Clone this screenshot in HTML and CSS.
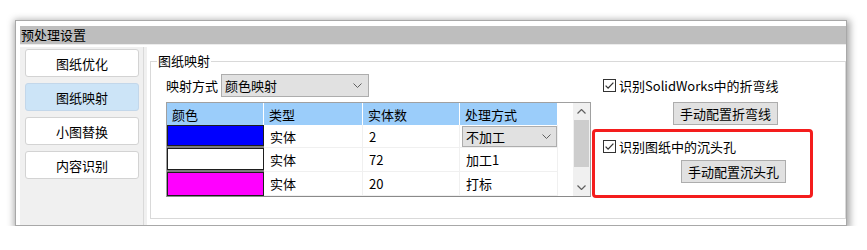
FILE: index.html
```html
<!DOCTYPE html>
<html lang="zh-CN">
<head>
<meta charset="utf-8">
<title>预处理设置</title>
<link rel="stylesheet" href="styles.css">
</head>
<body>
<div class="window">
  <div class="title">预处理设置</div>
  <div class="body">
    <div class="nav">
      <div class="nav-btn">图纸优化</div>
      <div class="nav-btn active">图纸映射</div>
      <div class="nav-btn">小图替换</div>
      <div class="nav-btn">内容识别</div>
    </div>
    <div class="main">
      <fieldset class="group">
        <legend>图纸映射</legend>
        <div class="group-inner">
          <div class="left-col">
            <div class="map-row">
              <span class="map-label">映射方式</span>
              <div class="combo">
                <span>颜色映射</span>
                <svg class="chev" width="9" height="5" viewBox="0 0 9 5"><path d="M0.5 0.5 L4.5 4.5 L8.5 0.5" fill="none" stroke="#606060" stroke-width="1"/></svg>
              </div>
            </div>
            <div class="data-table">
              <div class="th">颜色</div>
              <div class="th">类型</div>
              <div class="th">实体数</div>
              <div class="th">处理方式</div>
              <div class="th-fill"></div>
              <div class="scrollbar">
                <div class="sb-arrow"><svg width="9" height="5" viewBox="0 0 9 5"><path d="M0.5 4.5 L4.5 0.5 L8.5 4.5" fill="none" stroke="#606060" stroke-width="1.2"/></svg></div>
                <div class="sb-track"><div class="sb-thumb"></div></div>
                <div class="sb-arrow"><svg width="9" height="5" viewBox="0 0 9 5"><path d="M0.5 0.5 L4.5 4.5 L8.5 0.5" fill="none" stroke="#606060" stroke-width="1.2"/></svg></div>
              </div>

              <div class="sw"><div class="sw-in blue"></div></div>
              <div class="td">实体</div>
              <div class="td">2</div>
              <div class="td td-combo">
                <div class="cell-combo">
                  <span>不加工</span>
                  <svg class="chev" width="9" height="5" viewBox="0 0 9 5"><path d="M0.5 0.5 L4.5 4.5 L8.5 0.5" fill="none" stroke="#606060" stroke-width="1"/></svg>
                </div>
              </div>
              <div class="fill"></div>

              <div class="sw"><div class="sw-in white"></div></div>
              <div class="td">实体</div>
              <div class="td">72</div>
              <div class="td">加工1</div>
              <div class="fill"></div>

              <div class="sw last"><div class="sw-in magenta"></div></div>
              <div class="td">实体</div>
              <div class="td">20</div>
              <div class="td">打标</div>
              <div class="fill"></div>
            </div>
          </div>
          <div class="right-col">
            <div class="check">
              <svg class="cb" width="13" height="13" viewBox="0 0 13 13"><rect x="0.5" y="0.5" width="12" height="12" fill="#fff" stroke="#333"/><path d="M2.6 6.6 L5.1 9.1 L10.4 3.6" fill="none" stroke="#333" stroke-width="1.3"/></svg>
              <span>识别SolidWorks中的折弯线</span>
            </div>
            <div class="btn">手动配置折弯线</div>
            <div class="highlight">
              <div class="check">
                <svg class="cb" width="13" height="13" viewBox="0 0 13 13"><rect x="0.5" y="0.5" width="12" height="12" fill="#fff" stroke="#333"/><path d="M2.6 6.6 L5.1 9.1 L10.4 3.6" fill="none" stroke="#333" stroke-width="1.3"/></svg>
                <span>识别图纸中的沉头孔</span>
              </div>
              <div class="btn">手动配置沉头孔</div>
            </div>
          </div>
        </div>
      </fieldset>
    </div>
  </div>
</div>
</body>
</html>
```

FILE: styles.css
```css
* { box-sizing: border-box; }

body {
  margin: 0;
  background: #fff;
  font-family: "Noto Sans CJK SC", "Noto Sans", sans-serif;
  font-size: 13px;
  color: #000;
}

.window {
  margin: 20px 0 0 15px;
  width: 832px;
  height: 206px;
  border: 1px solid #a8a8a8;
  box-shadow: 1px 2px 7px 2px rgba(0, 0, 0, 0.35);
  background: #fff;
  padding: 5px 0 0 4px;
  display: flex;
  flex-direction: column;
}

.title {
  height: 18px;
  line-height: 18px;
  background: #bebebe;
  padding-left: 1px;
}

.body {
  flex: 1;
  display: flex;
  padding-top: 2px;
  border-top: 1px solid #ececec;
}

.nav {
  width: 123px;
  background: #f0f0f0;
  padding: 2px 0 0 5px;
  display: flex;
  flex-direction: column;
  gap: 6px;
}

.nav-btn {
  width: 114px;
  height: 28px;
  background: #fff;
  border: 1px solid #d3d3d3;
  border-radius: 3px;
  display: flex;
  align-items: center;
  justify-content: center;
}

.nav-btn.active {
  background: #cce4f7;
  border-color: #c3d7ea;
}

.main {
  flex: 1;
  border-left: 1px solid #d9d9d9;
  box-shadow: inset 3px 0 0 #f0f0f0;
  padding: 5px 0 5px 6px;
}

.group {
  margin: 0;
  border: 1px solid #d9d9d9;
  padding: 4px 0 20px 15px;
  min-width: 0;
}

.group legend {
  margin-left: -9px;
  padding: 0 1px;
  line-height: 18px;
}

.group-inner {
  display: flex;
}

.left-col {
  width: 425px;
}

.map-row {
  display: flex;
  align-items: center;
  gap: 3px;
  height: 23px;
}

.combo {
  width: 148px;
  height: 23px;
  border: 1px solid #adadad;
  background: #e1e1e1;
  display: flex;
  align-items: center;
  justify-content: space-between;
  padding: 0 6px 0 3px;
}

.data-table {
  margin-top: 5px;
  border: 1px solid #a0a0a0;
  border-bottom-color: #8a8a8a;
  display: grid;
  grid-template-columns: 97px 99px 97px 98px 15px 17px;
  grid-template-rows: 22px 23px 24px 24px;
  background: #fff;
}

.th {
  background: #9bcdfa;
  border-right: 1px solid #fff;
  padding-left: 5px;
  display: flex;
  align-items: center;
}

.th-fill { background: #fff; }

.scrollbar {
  grid-column: 6;
  grid-row: 1 / 5;
  background: #f0f0f0;
  display: flex;
  flex-direction: column;
}

.sb-arrow {
  height: 17px;
  display: flex;
  align-items: center;
  justify-content: center;
}

.sb-track {
  flex: 1;
  display: flex;
  flex-direction: column;
}

.sb-thumb {
  height: 47px;
  margin: 0 1px;
  background: #cdcdcd;
}

.td {
  padding-left: 6px;
  display: flex;
  align-items: center;
  border-bottom: 1px solid #f0f0f0;
  border-right: 1px solid #f0f0f0;
}

.td-combo {
  padding: 1px 0 0 2px;
  align-items: flex-start;
}

.cell-combo {
  width: 97px;
  height: 21px;
  border: 1px solid #adadad;
  background: #e1e1e1;
  display: flex;
  align-items: center;
  justify-content: space-between;
  padding: 0 5px 0 3px;
}

.sw {
  border-bottom: 2px solid #7c7c7c;
}

.sw.last { border-bottom: none; }

.sw-in {
  height: 100%;
  border: 1px solid #1e1e1e;
}

.blue { background: #0000ff; }
.white { background: #fff; }
.magenta { background: #ff00ff; }

.right-col {
  flex: 1;
  padding-top: 3px;
}

.check {
  display: flex;
  align-items: center;
  gap: 3px;
  line-height: 17px;
  padding-left: 12px;
}

.cb { flex: none; }

.btn {
  margin: 8px 0 0 82px;
  width: 105px;
  height: 23px;
  border: 1px solid #adadad;
  background: #e1e1e1;
  display: flex;
  align-items: center;
  justify-content: center;
}

.highlight {
  margin: 4px 0 0 1px;
  width: 221px;
  height: 69px;
  border: 3px solid #f41d1d;
  border-radius: 4px;
  padding: 6px 0 0 8px;
}

.highlight .check { padding-left: 0; }

.highlight .btn { margin: 5px 0 0 78px; }
```
